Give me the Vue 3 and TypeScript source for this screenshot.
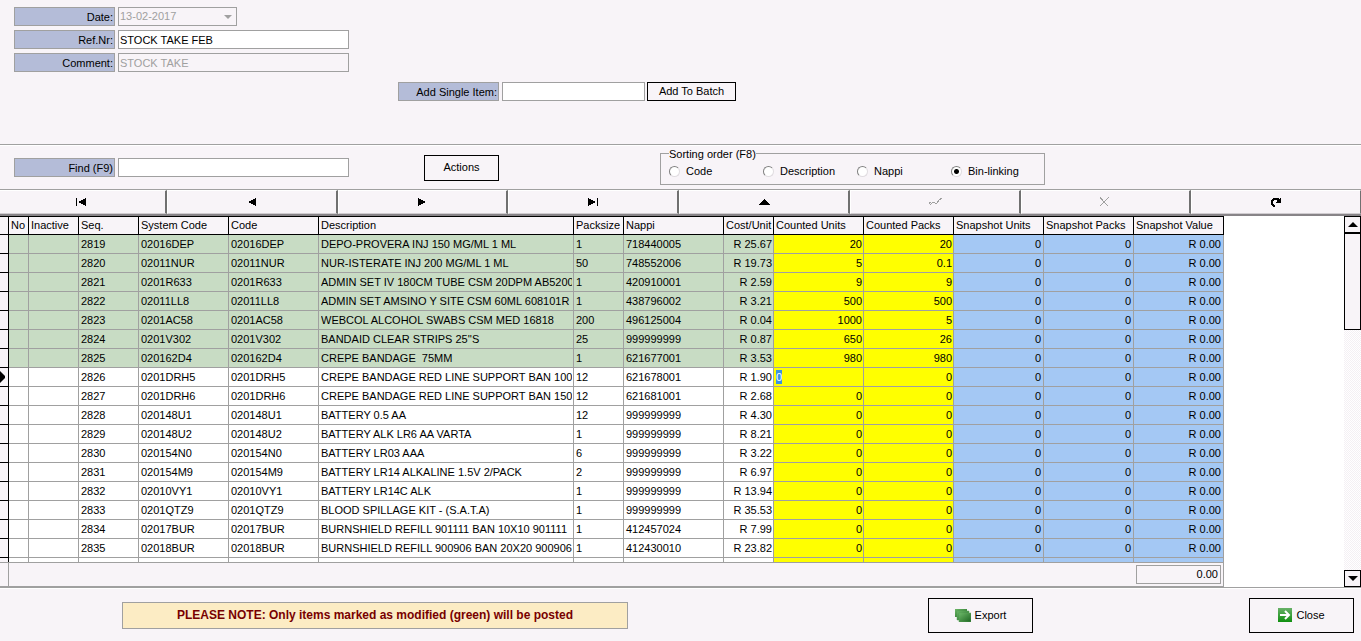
<script setup lang="ts">
import { onMounted, ref } from 'vue'

interface Item {
  seq: string
  code: string
  description: string
  pack: string
  nappi: string
  cost: string
  units: string
  packs: string
}

const source: string[][] = [
  ['2819', '02016DEP', 'DEPO-PROVERA INJ 150 MG/ML 1 ML', '1', '718440005', 'R 25.67', '20', '20'],
  ['2820', '02011NUR', 'NUR-ISTERATE INJ 200 MG/ML 1 ML', '50', '748552006', 'R 19.73', '5', '0.1'],
  ['2821', '0201R633', 'ADMIN SET IV 180CM TUBE CSM 20DPM AB52001', '1', '420910001', 'R 2.59', '9', '9'],
  ['2822', '02011LL8', 'ADMIN SET AMSINO Y SITE CSM 60ML 608101R', '1', '438796002', 'R 3.21', '500', '500'],
  ['2823', '0201AC58', 'WEBCOL ALCOHOL SWABS CSM MED 16818', '200', '496125004', 'R 0.04', '1000', '5'],
  ['2824', '0201V302', "BANDAID CLEAR STRIPS 25''S", '25', '999999999', 'R 0.87', '650', '26'],
  ['2825', '020162D4', 'CREPE BANDAGE\u00a0 75MM', '1', '621677001', 'R 3.53', '980', '980'],
  ['2826', '0201DRH5', 'CREPE BANDAGE RED LINE SUPPORT BAN 100M', '12', '621678001', 'R 1.90', '0', '0'],
  ['2827', '0201DRH6', 'CREPE BANDAGE RED LINE SUPPORT BAN 150M', '12', '621681001', 'R 2.68', '0', '0'],
  ['2828', '020148U1', 'BATTERY 0.5 AA', '12', '999999999', 'R 4.30', '0', '0'],
  ['2829', '020148U2', 'BATTERY ALK LR6 AA VARTA', '1', '999999999', 'R 8.21', '0', '0'],
  ['2830', '020154N0', 'BATTERY LR03 AAA', '6', '999999999', 'R 3.22', '0', '0'],
  ['2831', '020154M9', 'BATTERY LR14 ALKALINE 1.5V 2/PACK', '2', '999999999', 'R 6.97', '0', '0'],
  ['2832', '02010VY1', 'BATTERY LR14C ALK', '1', '999999999', 'R 13.94', '0', '0'],
  ['2833', '0201QTZ9', 'BLOOD SPILLAGE KIT - (S.A.T.A)', '1', '999999999', 'R 35.53', '0', '0'],
  ['2834', '02017BUR', 'BURNSHIELD REFILL 901111 BAN 10X10 901111', '1', '412457024', 'R 7.99', '0', '0'],
  ['2835', '02018BUR', 'BURNSHIELD REFILL 900906 BAN 20X20 900906', '1', '412430010', 'R 23.82', '0', '0'],
]

const items: Item[] = source.map(([seq, code, description, pack, nappi, cost, units, packs]) => ({
  seq, code, description, pack, nappi, cost, units, packs,
}))

const modifiedCount = 7
const currentSeq = '2826'

const headers = [
  'No', 'Inactive', 'Seq.', 'System Code', 'Code', 'Description', 'Packsize', 'Nappi', 'Cost/Unit',
  'Counted Units', 'Counted Packs', 'Snapshot Units', 'Snapshot Packs', 'Snapshot Value',
]

const sortOptions = ['Code', 'Description', 'Nappi', 'Bin-linking']
const sortOrder = ref('Bin-linking')
const refNr = ref('STOCK TAKE FEB')
const comment = ref('STOCK TAKE')
const newItem = ref('')
const find = ref('')
const counted = ref('0')

interface NavButton {
  label: string
  fill?: string
  stroke?: string
  muted?: boolean
}

const navButtons: NavButton[] = [
  { label: 'First', fill: 'M3 4h1v8H3zM13 4v8L5 8z' },
  { label: 'Previous', fill: 'M12 4v8L4 8z' },
  { label: 'Next', fill: 'M4 4v8l8-4z' },
  { label: 'Last', fill: 'M3 4v8l8-4zM12 4h1v8h-1z' },
  { label: 'Edit', fill: 'M3 11h11L8.500 5z' },
  { label: 'Post', stroke: 'M2 10V8h2M3 11l3-3 2 1h2l2-3 3-2', muted: true },
  { label: 'Cancel', stroke: 'M3 3l3 4 5 5M12 3L7 8l-4 4', muted: true },
  { label: 'Refresh', fill: 'M7 13H5L3 11V6l2-2h5l1 1 2-2v6H7l2-2-1-1H6L5 8v2l2 1z' },
]

const editor = ref<HTMLInputElement[] | null>(null)

onMounted(() => {
  const box = editor.value?.[0]
  box?.focus({ preventScroll: true })
  box?.select()
})
</script>

<template>
  <main class="window">
    <section class="details">
      <div class="line">
        <label class="tag" for="date">Date:</label>
        <div class="date">
          <select id="date" class="box" disabled>
            <option>13-02-2017</option>
          </select>
          <svg class="caret" viewBox="0 0 8 4" width="8" height="4"><path d="M0 0h8L4 4z" fill="#a0a0a0" /></svg>
        </div>
      </div>
      <div class="line">
        <label class="tag" for="ref">Ref.Nr:</label>
        <input id="ref" v-model="refNr" class="box wide" type="text" />
      </div>
      <div class="line">
        <label class="tag" for="comment">Comment:</label>
        <input id="comment" v-model="comment" class="box wide" type="text" disabled />
      </div>
      <div class="line add">
        <label class="tag" for="single">Add Single Item:</label>
        <div class="entry">
          <input id="single" v-model="newItem" class="box item" type="text" />
          <button class="btn batch" type="button">Add To Batch</button>
        </div>
      </div>
    </section>

    <section class="tools">
      <label class="tag" for="find">Find (F9)</label>
      <input id="find" v-model="find" class="box wide" type="text" />
      <button class="btn actions" type="button">Actions</button>
      <fieldset class="sorting">
        <legend>Sorting order (F8)</legend>
        <label v-for="option in sortOptions" :key="option" class="choice">
          <input v-model="sortOrder" type="radio" name="sort" :value="option" />
          {{ option }}
        </label>
      </fieldset>
    </section>

    <nav class="navigator">
      <button
        v-for="b in navButtons"
        :key="b.label"
        type="button"
        :aria-label="b.label"
        :disabled="b.muted"
      >
        <svg viewBox="0 0 16 16" width="16" height="16" shape-rendering="crispEdges">
          <path v-if="b.fill" :d="b.fill" fill="#000" />
          <path v-if="b.stroke" :d="b.stroke" fill="none" stroke="#a0a0a0" />
        </svg>
      </button>
    </nav>

    <section class="grid">
      <div class="sheet">
        <div class="rows">
          <table>
            <colgroup>
              <col class="w9" /><col class="w20" /><col class="w50" /><col class="w60" /><col class="w90" />
              <col class="w90" /><col class="w255" /><col class="w50" /><col class="w100" /><col class="w50" />
              <col class="w90" /><col class="w90" /><col class="w90" /><col class="w90" /><col class="w90" />
            </colgroup>
            <thead>
              <tr>
                <th class="mark"></th>
                <th v-for="h in headers" :key="h" scope="col">{{ h }}</th>
              </tr>
            </thead>
            <tbody>
              <tr v-for="(item, i) in items" :key="item.seq" :class="{ modified: i < modifiedCount }">
                <td class="mark">
                  <svg v-if="item.seq === currentSeq" viewBox="0 0 6 12" width="6" height="12">
                    <path d="M0 0l5 5v2l-5 5z" fill="#000" />
                  </svg>
                </td>
                <td></td>
                <td></td>
                <td>{{ item.seq }}</td>
                <td>{{ item.code }}</td>
                <td>{{ item.code }}</td>
                <td><span class="clip">{{ item.description }}</span></td>
                <td>{{ item.pack }}</td>
                <td>{{ item.nappi }}</td>
                <td class="num">{{ item.cost }}</td>
                <td class="num count">
                  <input
                    v-if="item.seq === currentSeq"
                    ref="editor"
                    v-model="counted"
                    class="editor"
                    type="text"
                    aria-label="Counted Units"
                  />
                  <template v-else>{{ item.units }}</template>
                </td>
                <td class="num count">{{ item.packs }}</td>
                <td class="num snap">0</td>
                <td class="num snap">0</td>
                <td class="num snap">R 0.00</td>
              </tr>
              <tr>
                <td class="mark"></td>
                <td v-for="n in 9" :key="n"></td>
                <td v-for="n in 2" :key="'c' + n" class="count"></td>
                <td v-for="n in 3" :key="'s' + n" class="snap"></td>
              </tr>
            </tbody>
          </table>
        </div>
        <div class="totals">
          <output class="total">0.00</output>
        </div>
      </div>
      <div class="scroll">
        <button type="button" aria-label="Scroll up">
          <svg viewBox="0 0 10 5" width="10" height="5"><path d="M0 5h10L5 0z" /></svg>
        </button>
        <div class="thumb"></div>
        <button class="down" type="button" aria-label="Scroll down">
          <svg viewBox="0 0 10 5" width="10" height="5"><path d="M0 0h10L5 5z" /></svg>
        </button>
      </div>
    </section>

    <footer class="bottom">
      <p class="note">PLEASE NOTE: Only items marked as modified (green) will be posted</p>
      <div class="commands">
        <button class="btn command" type="button">
          <svg viewBox="0 0 16 13" width="16" height="13">
            <defs>
              <linearGradient id="sheetFill" x1="0" y1="0" x2="1" y2="1">
                <stop offset="0" stop-color="#6cb868" />
                <stop offset="1" stop-color="#1c6420" />
              </linearGradient>
            </defs>
            <path d="M0 0h12v8H0z" fill="url(#sheetFill)" />
            <path d="M2 2h12v9H2z" fill="url(#sheetFill)" stroke="#58a058" stroke-width="0.500" />
            <path d="M4 4h12v9H4z" fill="url(#sheetFill)" stroke="#58a058" stroke-width="0.500" />
          </svg>
          Export
        </button>
        <button class="btn command" type="button">
          <svg viewBox="0 0 14 14" width="14" height="14">
            <defs>
              <linearGradient id="exitFill" x1="0" y1="0" x2="0" y2="1">
                <stop offset="0" stop-color="#68b068" />
                <stop offset="1" stop-color="#109010" />
              </linearGradient>
            </defs>
            <path d="M0 0h14v14H0z" fill="url(#exitFill)" />
            <path d="M2 7h9M7 3l4 4-4 4" fill="none" stroke="#fff" stroke-width="2" />
          </svg>
          Close
        </button>
      </div>
    </footer>
  </main>
</template>

<style>
body {
  margin: 0;
  background: #f8f4f8;
}
</style>

<style scoped>
.window {
  display: flex;
  flex-direction: column;
  height: 100vh;
  overflow: hidden;
  background: #f8f4f8;
  color: #000;
  font: 11px/17px "Liberation Sans", Arial, sans-serif;
}
.window * {
  box-sizing: border-box;
}
button,
input,
select {
  margin: 0;
  font: inherit;
  color: inherit;
  border-radius: 0;
  outline: none;
}
.details {
  display: flex;
  flex-direction: column;
  gap: 4px;
  padding: 7px 14px 43px;
  border-bottom: 1px solid #a0a0a0;
}
.line {
  display: flex;
  gap: 3px;
}
.add {
  margin: 6px 0 0 384px;
}
.entry {
  display: flex;
  gap: 2px;
}
.tag {
  flex: none;
  width: 101px;
  height: 19px;
  padding: 1px 1px 0 0;
  border: 1px solid #a0a0a0;
  background: #b4bcd8;
  text-align: right;
}
.box {
  height: 19px;
  padding: 0 1px;
  border: 1px solid #a0a0a0;
  background: #fff;
}
.box:disabled {
  background: #f8f4f8;
  color: #a0a0a0;
  opacity: 1;
}
.wide {
  width: 231px;
}
.item {
  width: 143px;
}
.date {
  display: flex;
  align-items: center;
  position: relative;
  width: 119px;
}
.date select {
  width: 100%;
  appearance: none;
}
.caret {
  position: absolute;
  right: 5px;
  top: 8px;
}
.btn {
  display: flex;
  align-items: center;
  justify-content: center;
  padding: 0;
  border: 1px solid #000;
  background: #f8f4f8;
}
.batch {
  width: 89px;
  height: 19px;
}
.tools {
  display: flex;
  align-items: center;
  gap: 3px;
  height: 44px;
  padding: 0 14px;
  border-top: 1px solid #fff;
}
.actions {
  width: 75px;
  height: 26px;
  margin-left: 72px;
}
.sorting {
  display: flex;
  width: 385px;
  height: 37px;
  margin: 0 0 3px 158px;
  padding: 3px 8px 0;
  border: 1px solid #a0a0a0;
}
.sorting legend {
  height: 12px;
  padding: 0;
  line-height: 13px;
}
.choice {
  display: flex;
  align-items: center;
  gap: 6px;
  width: 94px;
  height: 17px;
}
.choice:last-child {
  width: 80px;
}
.choice input {
  width: 11px;
  height: 11px;
  appearance: none;
  border: 1px solid;
  border-color: #808080 #e0dce0 #e0dce0 #808080;
  border-radius: 50%;
  background: #fff;
}
.choice input:checked {
  background: radial-gradient(circle, #000 0 2px, #fff 3px);
}
.navigator {
  display: flex;
  height: 27px;
  margin-left: -4px;
  border-top: 1px solid #a0a0a0;
  border-bottom: 2px solid #888488;
}
.navigator button {
  display: flex;
  flex: 1;
  align-items: center;
  justify-content: center;
  padding: 0;
  border: 1px solid;
  border-color: #fff #707070 #d0ccd0 #fff;
  border-right-width: 2px;
  background: #f8f4f8;
}
.navigator button:last-child {
  border-right-width: 1px;
}
.grid {
  display: flex;
  flex: 1;
  min-height: 0;
  border-bottom: 1px solid #a0a0a0;
  background: #fff;
}
.sheet {
  display: flex;
  flex: 1;
  flex-direction: column;
  min-width: 0;
}
.rows {
  flex: 1;
  min-height: 0;
  overflow: hidden;
}
table {
  width: 1224px;
  table-layout: fixed;
  border-collapse: separate;
  border-spacing: 0;
}
.w9 { width: 9px; }
.w20 { width: 20px; }
.w50 { width: 50px; }
.w60 { width: 60px; }
.w90 { width: 90px; }
.w100 { width: 100px; }
.w255 { width: 255px; }
th,
td {
  height: 19px;
  padding: 0 1px 0 2px;
  border-right: 1px solid #a0a0a0;
  border-bottom: 1px solid #a0a0a0;
  line-height: 17px;
  font-weight: normal;
  text-align: left;
  white-space: nowrap;
  overflow: hidden;
}
th {
  border-top: 1px solid #000;
  border-right-color: #000;
  border-bottom-color: #000;
  background: #f8f4f8;
}
.modified td {
  background: #c8dcc4;
}
td.num {
  text-align: right;
}
td.count {
  background: #ff0;
}
td.snap {
  padding-right: 2px;
  background: #a4c8f4;
}
td.mark {
  padding: 0;
  border-right-color: #000;
  border-bottom-color: #000;
  background: #f8f4f8;
}
.mark svg,
.clip {
  display: block;
}
.clip {
  overflow: hidden;
}
.editor {
  display: block;
  width: 100%;
  height: 14px;
  padding: 0;
  border: 0;
  background: transparent;
  line-height: 14px;
}
.editor::selection {
  background: #3c94e0;
  color: #fff;
}
.totals {
  display: flex;
  justify-content: flex-end;
  width: 1224px;
  height: 25px;
  padding: 2px 2px 0 0;
  border: 1px solid #a0a0a0;
  border-left: 0;
  background: #f8f4f8;
}
.totals::before {
  content: "";
  width: 8px;
  height: 23px;
  margin: -2px auto 0 0;
  border-right: 1px solid #a0a0a0;
}
.total {
  width: 85px;
  height: 19px;
  padding-right: 2px;
  border: 1px solid #a0a0a0;
  text-align: right;
}
.scroll {
  display: flex;
  flex-direction: column;
  width: 17px;
  background: repeating-conic-gradient(#fff 0 25%, #f4f0f4 0 50%) 0 0 / 2px 2px;
}
.scroll button {
  display: flex;
  align-items: center;
  justify-content: center;
  height: 17px;
  padding: 0;
  border: 1px solid #000;
  background: #f8f4f8;
}
.thumb {
  height: 97px;
  border: 1px solid #000;
  background: #f8f4f8;
}
.scroll .down {
  margin-top: auto;
}
.bottom {
  display: flex;
  align-items: center;
  justify-content: space-between;
  height: 53px;
  padding: 0 7px 0 122px;
  border-top: 1px solid #fff;
}
.note {
  width: 506px;
  height: 27px;
  margin: 0;
  border: 1px solid #a0a0a0;
  background: #fcecc4;
  color: #780000;
  font-size: 12px;
  font-weight: bold;
  line-height: 25px;
  text-align: center;
}
.commands {
  display: flex;
  gap: 216px;
}
.command {
  gap: 4px;
  width: 105px;
  height: 35px;
}
</style>
